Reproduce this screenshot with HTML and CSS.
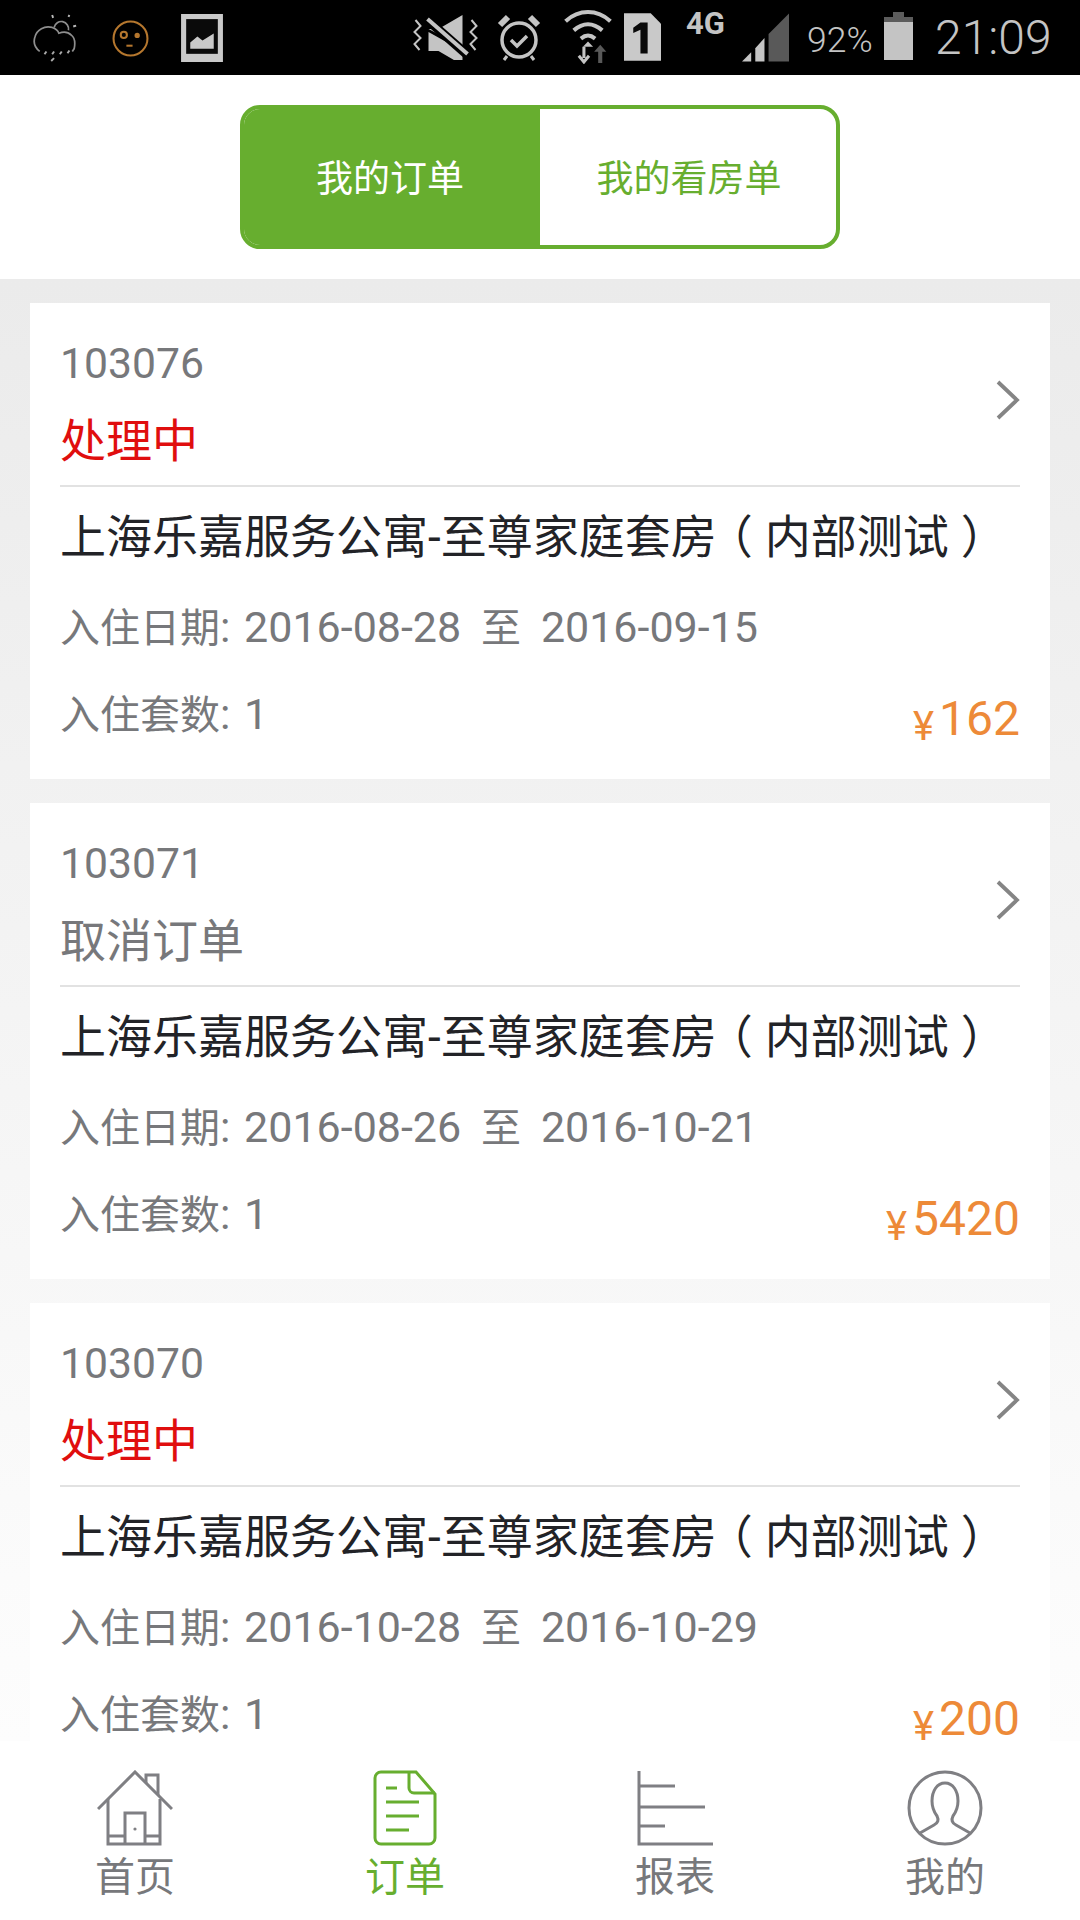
FILE: index.html
```html
<!DOCTYPE html>
<html lang="zh-CN">
<head>
<meta charset="utf-8">
<title>我的订单</title>
<link rel="stylesheet" href="styles.css">
</head>
<body>
<div class="page">
  <div class="status-bar">
    <svg class="si si-weather" viewBox="0 0 48 52" fill="none" stroke="#8e8e8e" stroke-width="1.8"><path d="M7 40C2 36 0 31 2 25 4 17 12 13 20 15c3 1 6 3 7 6 5-2 10-1 13 2 4 3 4 9 3 14l-2 3" /><path d="M22 15c1-4 5-7 9-6 4 1 7 5 6 9" /><path d="M20 2l1 3M38 2l-1 2M45 13l-3 1" stroke="#bbb" stroke-width="2"/><path d="M14 40l-2 3M22 40l-2 3M30 40l-2 3M38 39l-2 3M22 47l-3 3" stroke="#aaa" stroke-width="2"/></svg>
    <svg class="si si-face" viewBox="0 0 36 36" fill="none" stroke="#b5772e" stroke-width="2"><circle cx="18" cy="18" r="16.5"/><circle cx="11.5" cy="14.5" r="3"/><circle cx="24.5" cy="15" r="1.6" fill="#b5772e"/><path d="M14 25h6"/></svg>
    <svg class="si si-photo" viewBox="0 0 41 47"><rect width="41" height="47" fill="#c9c9c9"/><rect x="5" y="5" width="31" height="34" fill="#0a0a0a"/><path d="M9 34v-6l7-6 5 4 11-7v15z" fill="#c9c9c9"/></svg>
    <span class="status-spacer"></span>
    <svg class="si si-mute" viewBox="0 0 68 46" fill="none"><path d="M6 6l5 6-6 6 6 6-6 6 5 6 M62 6l5 6-6 6 6 6-6 6 5 6" transform="translate(-4 0)" stroke="#c4c4c4" stroke-width="2"/><path d="M15 15h10L49 1v32zM15 18v19h10l24 14V37z" fill="#c4c4c4"/><path d="M13 5l41 36" stroke="#000" stroke-width="9"/><path d="M14 5l40 35" stroke="#c4c4c4" stroke-width="4"/></svg>
    <svg class="si si-alarm" viewBox="0 0 44 48" fill="none" stroke="#c4c4c4"><circle cx="22" cy="26" r="17" stroke-width="3.5"/><path d="M3 11l8-8M41 11l-8-8" stroke-width="6"/><path d="M10 42l-3 4M34 42l3 4" stroke-width="3"/><path d="M14 26l6 6 10-10" stroke-width="3.5"/></svg>
    <svg class="si si-wifi" viewBox="0 0 48 54" fill="none" stroke="#c4c4c4" stroke-width="4"><path d="M2 12c13-12 31-12 44 0M10 21c9-8 19-8 28 0M17 29c5-4 9-4 14 0"/><path d="M24 32l-5 5h10z" fill="#c4c4c4" stroke="none"/><path d="M20 37v11M15 46l5 6 5-6" stroke-width="3"/><path d="M36 35l-6 7h4v11h4V42h4z" fill="#595959" stroke="none"/></svg>
    <svg class="si si-sim" viewBox="0 0 36 46"><path d="M0 0h26l10 10v36H0z" fill="#c9c9c9"/><path d="M16 9h7v30h-7V16l-7 3v-5z" fill="#0a0a0a"/></svg>
    <span class="net-type">4G</span>
    <svg class="si si-signal" viewBox="0 0 46 48"><path d="M0 48l9-9v9z" fill="#c4c4c4"/><path d="M13 35l9-10v23h-9z" fill="#c4c4c4"/><path d="M26 21L46 1v47H26z" fill="#595959"/></svg>
    <span class="battery-pct">92%</span>
    <svg class="si si-battery" viewBox="0 0 29 48"><rect x="9" y="0" width="11" height="6" fill="#5c5c5c"/><rect y="5" width="29" height="5" fill="#5c5c5c"/><rect y="10" width="29" height="38" fill="#c4c4c4"/></svg>
    <span class="clock">21:09</span>
  </div>

  <div class="header">
    <div class="segment">
      <div class="seg seg-active">我的订单</div>
      <div class="seg seg-idle">我的看房单</div>
    </div>
  </div>

  <div class="list">
    <div class="card">
      <div class="card-head">
        <div class="head-text">
          <div class="order-id">103076</div>
          <div class="state state-busy">处理中</div>
        </div>
        <svg class="chevron" viewBox="0 0 24 40" fill="none" stroke="#858585" stroke-width="3.8"><path d="M2 2l19 18L2 38"/></svg>
      </div>
      <div class="card-title">上海乐嘉服务公寓-至尊家庭套房<span class="paren-open">（</span>内部测试<span class="paren-close">）</span></div>
      <div class="card-dates">入住日期<span class="num">: 2016-08-28</span>&nbsp; 至&nbsp; <span class="num">2016-09-15</span></div>
      <div class="card-foot">
        <div class="count">入住套数<span class="num">: 1</span></div>
        <div class="price"><span class="yen">¥</span>162</div>
      </div>
    </div>

    <div class="card">
      <div class="card-head">
        <div class="head-text">
          <div class="order-id">103071</div>
          <div class="state state-cancel">取消订单</div>
        </div>
        <svg class="chevron" viewBox="0 0 24 40" fill="none" stroke="#858585" stroke-width="3.8"><path d="M2 2l19 18L2 38"/></svg>
      </div>
      <div class="card-title">上海乐嘉服务公寓-至尊家庭套房<span class="paren-open">（</span>内部测试<span class="paren-close">）</span></div>
      <div class="card-dates">入住日期<span class="num">: 2016-08-26</span>&nbsp; 至&nbsp; <span class="num">2016-10-21</span></div>
      <div class="card-foot">
        <div class="count">入住套数<span class="num">: 1</span></div>
        <div class="price"><span class="yen">¥</span>5420</div>
      </div>
    </div>

    <div class="card">
      <div class="card-head">
        <div class="head-text">
          <div class="order-id">103070</div>
          <div class="state state-busy">处理中</div>
        </div>
        <svg class="chevron" viewBox="0 0 24 40" fill="none" stroke="#858585" stroke-width="3.8"><path d="M2 2l19 18L2 38"/></svg>
      </div>
      <div class="card-title">上海乐嘉服务公寓-至尊家庭套房<span class="paren-open">（</span>内部测试<span class="paren-close">）</span></div>
      <div class="card-dates">入住日期<span class="num">: 2016-10-28</span>&nbsp; 至&nbsp; <span class="num">2016-10-29</span></div>
      <div class="card-foot">
        <div class="count">入住套数<span class="num">: 1</span></div>
        <div class="price"><span class="yen">¥</span>200</div>
      </div>
    </div>
  </div>

  <div class="tabbar">
    <div class="tab">
      <svg class="tab-icon" viewBox="0 0 76 76" fill="none" stroke="#7f7f83" stroke-width="3"><path d="M1 39L38 2l37 37"/><path d="M11 29v45h52V29"/><path d="M49 13V5h12v20"/><path d="M28 74V43h20v31"/><path d="M11 66h17M48 66h15"/><circle cx="38" cy="59" r="1.6" fill="#7f7f83" stroke="none"/></svg>
      <div class="tab-label">首页</div>
    </div>
    <div class="tab tab-on">
      <svg class="tab-icon" viewBox="0 0 76 76" fill="none" stroke="#67ae2f" stroke-width="3"><path d="M49 2H14a6 6 0 0 0-6 6v60a6 6 0 0 0 6 6h48a6 6 0 0 0 6-6V24z"/><path d="M42 2v16a5 5 0 0 0 5 5h21"/><path d="M19 18h11M19 32h33M19 46h33M19 60h23"/></svg>
      <div class="tab-label">订单</div>
    </div>
    <div class="tab">
      <svg class="tab-icon" viewBox="0 0 76 76" fill="none" stroke="#7f7f83" stroke-width="3"><path d="M2 1v73h74"/><path d="M2 16h36M2 37h66M2 56h26"/></svg>
      <div class="tab-label">报表</div>
    </div>
    <div class="tab">
      <svg class="tab-icon" viewBox="0 0 76 76" fill="none" stroke="#7f7f83" stroke-width="3"><circle cx="38" cy="38" r="36"/><path d="M13 63l14-8c4-2 5-5 3-9-3-4-5-9-5-15 0-10 5-18 13-18s13 8 13 18c0 6-2 11-5 15-2 4-1 7 3 9l14 8"/></svg>
      <div class="tab-label">我的</div>
    </div>
  </div>
</div>
</body>
</html>
```

FILE: styles.css
```css
* { box-sizing: border-box; }
html, body { margin: 0; padding: 0; }
body {
  width: 1080px;
  height: 1920px;
  overflow: hidden;
  background: #fff;
  font-family: Roboto, "Noto Sans CJK SC", sans-serif;
}
.page { display: flex; flex-direction: column; width: 1080px; height: 1920px; }

.status-bar {
  height: 75px;
  flex: none;
  background: #000;
  color: #c4c4c4;
  display: flex;
  align-items: flex-start;
}
.si { display: block; flex: none; }
.si-weather { width: 46px; height: 52px; margin: 12px 0 0 33px; }
.si-face { width: 37px; height: 37px; margin: 20px 0 0 33px; }
.si-photo { width: 42px; height: 48px; margin: 14px 0 0 32px; }
.status-spacer { flex: 1; }
.si-mute { width: 69px; height: 46px; margin: 14px 0 0 0; }
.si-alarm { width: 44px; height: 48px; margin: 14px 0 0 15px; }
.si-wifi { width: 50px; height: 55px; margin: 9px 0 0 22px; }
.si-sim { width: 37px; height: 48px; margin: 13px 0 0 11px; }
.net-type { font-size: 31px; font-weight: 700; line-height: 28px; margin: 10px 0 0 25px; width: 38px; }
.si-signal { width: 47px; height: 50px; margin: 12px 0 0 18px; }
.battery-pct { font-size: 35.5px; font-weight: 300; line-height: 40px; margin: 20px 0 0 18px; width: 66px; }
.si-battery { width: 29px; height: 50px; margin: 11px 0 0 11px; }
.clock { font-size: 48px; font-weight: 300; line-height: 50px; margin: 13px 30px 0 22px; width: 115px; white-space: nowrap; }

.header {
  height: 204px;
  flex: none;
  background: #fff;
  padding-top: 30px;
  display: flex;
  justify-content: center;
  align-items: flex-start;
}
.segment {
  width: 600px;
  height: 144px;
  display: flex;
  border: 4px solid #67ae2f;
  border-radius: 20px;
  overflow: hidden;
  background: #fff;
}
.seg { display: flex; align-items: center; justify-content: center; font-size: 37px; padding-bottom: 2px; }
.seg-active { width: 296px; background: #67ae2f; color: #fff; padding-right: 4px; }
.seg-idle { flex: 1; color: #67ae2f; padding-left: 2px; }

.list {
  flex: 1;
  min-height: 0;
  overflow: hidden;
  padding: 24px 30px 0;
  display: flex;
  flex-direction: column;
  gap: 24px;
  background: linear-gradient(#ebebeb, #fdfdfd);
}
.card {
  flex: none;
  height: 476px;
  background: #fff;
  padding: 0 30px;
}
.card-head {
  height: 184px;
  border-bottom: 2px solid #e2e2e2;
  display: flex;
  justify-content: space-between;
  align-items: center;
}
.head-text { align-self: flex-start; padding-top: 36px; }
.order-id { font-size: 42.7px; line-height: 48px; color: #77787b; }
.state { font-size: 46px; line-height: 56px; margin-top: 26px; }
.state-busy { color: #e00e0e; }
.state-cancel { color: #77787b; }
.chevron { width: 24px; height: 40px; display: block; margin-top: 12px; }
.card-title { font-size: 46px; line-height: 60px; margin-top: 20px; color: #222327; white-space: nowrap; }
.paren-open { font-feature-settings: "halt"; margin-left: 13px; margin-right: 12px; }
.paren-close { margin-left: 12px; }
.card-dates { font-size: 40px; line-height: 50px; margin-top: 35px; color: #77787b; white-space: nowrap; }
.num { font-size: 43px; word-spacing: 3px; }
.card-foot {
  display: flex;
  justify-content: space-between;
  align-items: flex-start;
  margin-top: 35px;
}
.count { font-size: 40px; line-height: 50px; color: #77787b; }
.price { font-size: 48px; line-height: 56px; margin-top: 2px; color: #ed8a38; display: flex; align-items: baseline; }
.yen { font-size: 40px; margin-right: 5px; position: relative; top: 5px; }

.tabbar {
  flex: none;
  height: 179px;
  background: #fff;
  display: grid;
  grid-template-columns: repeat(4, 1fr);
  padding-top: 29px;
}
.tab { display: flex; flex-direction: column; align-items: center; color: #77787b; }
.tab-on { color: #67ae2f; }
.tab-icon { width: 76px; height: 76px; display: block; }
.tab-label { font-size: 40px; line-height: 50px; margin-top: 7px; }
```
